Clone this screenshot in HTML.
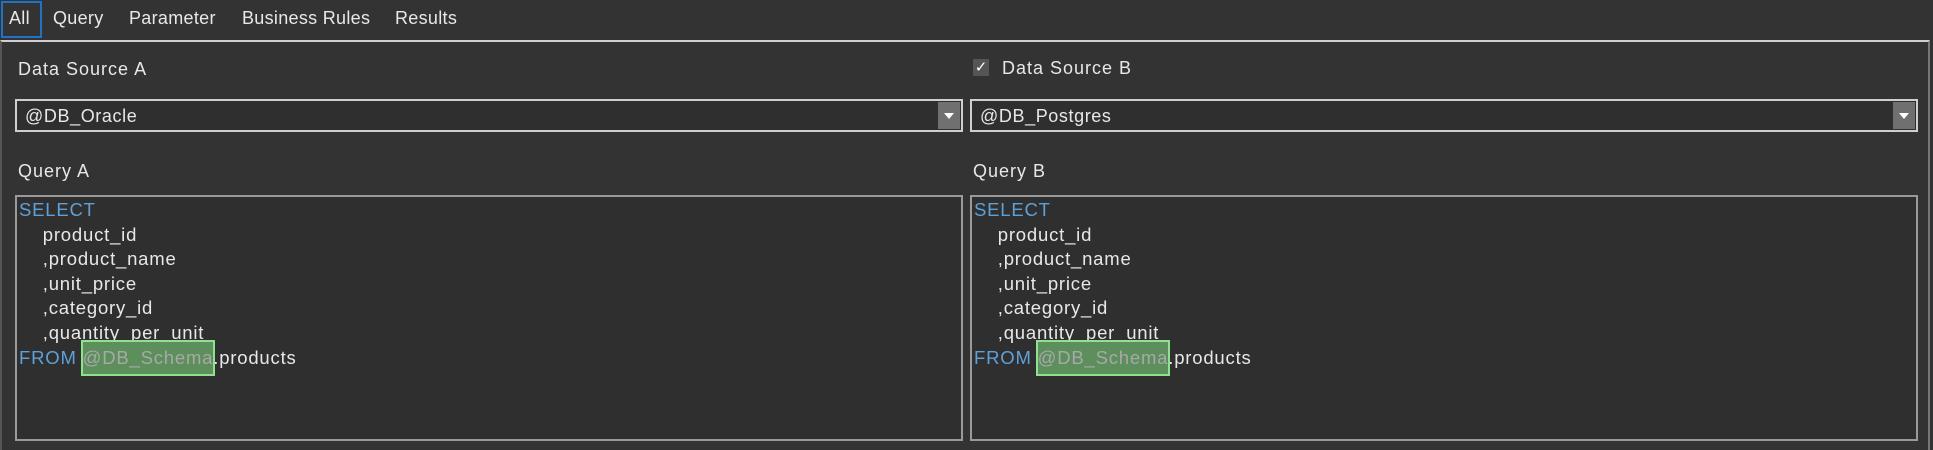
<!DOCTYPE html>
<html><head><style>
body{margin:0;width:1933px;height:445px;background:#333;overflow:hidden;font-family:"Liberation Sans",sans-serif;color:#e8e8e8;position:relative}
.a{position:absolute}
.tab{top:8px;font-size:18px;letter-spacing:0.3px}
.lbl{font-size:18px;letter-spacing:1px}
.combo{border:2px solid #cfcfcf;background:#2f2f2f;height:33px;box-sizing:border-box}
.combo span{position:absolute;left:8px;top:5px;font-size:18px;letter-spacing:0.6px}
.btn{position:absolute;right:1px;top:1px;width:22px;height:27px;background:#707070}
.btn:after{content:"";position:absolute;left:6px;top:11px;border-left:5px solid transparent;border-right:5px solid transparent;border-top:6px solid #fff}
.box{border:2px solid #9a9a9a;background:#2f2f2f;box-sizing:border-box;top:195px;height:246px}
.code{position:absolute;left:2px;top:1px;font-size:18.5px;line-height:24.6px;white-space:pre;letter-spacing:0.8px}
.k{color:#5ea0d8}
.hl{background:#5d8f5d;outline:2px solid #90e090;color:#a8a8a8;padding:5px 0 6px}
</style></head><body>
<div class="a" style="left:1px;top:1px;width:41px;height:37px;border:2px solid #1e72c8;box-sizing:border-box"></div>
<div class="a tab" style="left:9px">All</div>
<div class="a tab" style="left:53px">Query</div>
<div class="a tab" style="left:129px">Parameter</div>
<div class="a tab" style="left:242px">Business Rules</div>
<div class="a tab" style="left:395px">Results</div>
<div class="a" style="left:0;top:40px;width:1930px;height:410px;border-top:2px solid #cfcfcf;border-left:2px solid #555;border-right:2px solid #777;box-sizing:border-box"></div>
<div class="a lbl" style="left:18px;top:59px">Data Source A</div>
<div class="a" style="left:973px;top:59px;width:16px;height:17px;background:#555;color:#fff;font-size:15px;line-height:17px;text-align:center">✓</div>
<div class="a lbl" style="left:1002px;top:58px">Data Source B</div>
<div class="a combo" style="left:15px;top:99px;width:948px"><span>@DB_Oracle</span><div class="btn"></div></div>
<div class="a combo" style="left:970px;top:99px;width:948px"><span>@DB_Postgres</span><div class="btn"></div></div>
<div class="a lbl" style="left:18px;top:161px">Query A</div>
<div class="a lbl" style="left:973px;top:161px">Query B</div>
<div class="a box" style="left:15px;width:948px"><div class="code"><span class="k">SELECT</span>
    product_id
    ,product_name
    ,unit_price
    ,category_id
    ,quantity_per_unit
<span class="k">FROM</span> <span class="hl">@DB_Schema</span>.products</div></div>
<div class="a box" style="left:970px;width:948px"><div class="code"><span class="k">SELECT</span>
    product_id
    ,product_name
    ,unit_price
    ,category_id
    ,quantity_per_unit
<span class="k">FROM</span> <span class="hl">@DB_Schema</span>.products</div></div>
</body></html>
